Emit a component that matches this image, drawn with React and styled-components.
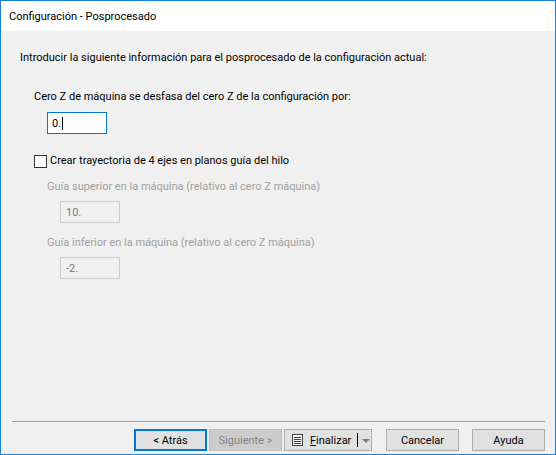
import React from "react";
import styled, { createGlobalStyle } from "styled-components";

const GlobalStyle = createGlobalStyle`
  html, body {
    margin: 0;
    padding: 0;
    background: #ffffff;
  }
  body {
    font-family: Roboto, "Liberation Sans", sans-serif;
    font-size: 11px;
    color: #000;
  }
`;

const Window = styled.div`
  width: 556px;
  height: 455px;
  box-sizing: border-box;
  border: 1px solid #1883d7;
  display: flex;
  flex-direction: column;
  background: #f0f0f0;
`;

const TitleBar = styled.div`
  height: 30px;
  flex: none;
  background: #ffffff;
  display: flex;
  align-items: center;
  padding-left: 8px;
  padding-top: 1px;
  box-sizing: border-box;
  font-size: 11px;
  line-height: 15px;
`;

const Body = styled.div`
  flex: 1;
  display: flex;
  flex-direction: column;
  padding: 19px 0 0 19px;
`;

const Text = styled.div`
  line-height: 15px;
  height: 15px;
  white-space: nowrap;
  margin-top: ${(p) => p.$mt || 0}px;
  margin-left: ${(p) => p.$ml || 0}px;
  color: ${(p) => (p.$disabled ? "#a0a0a0" : "#000")};
`;

const Field = styled.div`
  width: 60px;
  height: 22px;
  box-sizing: border-box;
  margin-top: ${(p) => p.$mt || 0}px;
  margin-left: ${(p) => p.$ml || 0}px;
  border: 1px solid ${(p) => (p.$disabled ? "#cccccc" : "#0078d7")};
  background: ${(p) => (p.$disabled ? "#f0f0f0" : "#ffffff")};
  color: ${(p) => (p.$disabled ? "#7a7a7a" : "#000")};
  padding-left: ${(p) => (p.$disabled ? 5 : 4)}px;
  display: flex;
  align-items: center;
  line-height: 15px;
`;

const Caret = styled.span`
  display: inline-block;
  width: 1px;
  height: 13px;
  background: #000;
  margin-left: 1px;
`;

const CheckRow = styled.label`
  display: flex;
  align-items: center;
  height: 15px;
  margin-top: 19px;
  margin-left: 14px;
  line-height: 15px;
  white-space: nowrap;
`;

const CheckBox = styled.span`
  width: 13px;
  height: 13px;
  box-sizing: border-box;
  border: 1px solid #333333;
  background: #ffffff;
  margin-right: 3px;
  margin-top: 1px;
`;

const Footer = styled.div`
  flex: none;
  padding: 0 10px 3px 11px;
`;

const Separator = styled.div`
  height: 1px;
  background: #a0a0a0;
  margin-bottom: 7px;
`;

const ButtonRow = styled.div`
  display: flex;
  justify-content: flex-end;
  align-items: center;
`;

const Button = styled.div`
  width: 73px;
  height: 22px;
  box-sizing: border-box;
  margin-left: ${(p) => p.$ml || 0}px;
  border: ${(p) => (p.$default ? "2px" : "1px")} solid;
  background: ${(p) => (p.$disabled ? "#cccccc" : "#e1e1e1")};
  border-color: ${(p) => (p.$disabled ? "#bfbfbf" : p.$default ? "#0078d7" : "#adadad")};
  color: ${(p) => (p.$disabled ? "#838383" : "#000")};
  display: flex;
  align-items: center;
  justify-content: center;
  line-height: 15px;
  white-space: nowrap;
`;

const SplitButton = styled.div`
  width: 88px;
  height: 22px;
  box-sizing: border-box;
  margin-left: 2px;
  border: 1px solid #adadad;
  background: #e1e1e1;
  display: flex;
  align-items: center;
  padding-left: 7px;
  line-height: 15px;
  white-space: nowrap;
`;

const SplitLabel = styled.span`
  margin-left: 7px;
  u {
    text-decoration: underline;
    text-underline-offset: 1px;
  }
`;

const SplitDivider = styled.span`
  width: 1px;
  height: 14px;
  background: #000;
  margin-left: 6px;
`;

const Arrow = styled.span`
  width: 0;
  height: 0;
  border-left: 4px solid transparent;
  border-right: 4px solid transparent;
  border-top: 4px solid #7a7a7a;
  margin-left: 4px;
  margin-top: 1px;
`;

const DocIcon = () => (
  <svg width="11" height="12" viewBox="0 0 11 12" shapeRendering="crispEdges">
    <rect x="0.5" y="0.5" width="10" height="11" fill="#f4f4f4" stroke="#404040" />
    <line x1="2" y1="3.5" x2="9" y2="3.5" stroke="#404040" />
    <line x1="2" y1="5.5" x2="9" y2="5.5" stroke="#404040" />
    <line x1="2" y1="7.5" x2="9" y2="7.5" stroke="#404040" />
    <line x1="2" y1="9.5" x2="9" y2="9.5" stroke="#404040" />
  </svg>
);

export default function App() {
  return (
    <>
      <GlobalStyle />
      <Window>
        <TitleBar>Configuración - Posprocesado</TitleBar>
        <Body>
          <Text>Introducir la siguiente información para el posprocesado de la configuración actual:</Text>
          <Text $mt={24} $ml={14}>Cero Z de máquina se desfasa del cero Z de la configuración por:</Text>
          <Field $mt={8} $ml={27}>
            0.<Caret />
          </Field>
          <CheckRow>
            <CheckBox />
            Crear trayectoria de 4 ejes en planos guía del hilo
          </CheckRow>
          <Text $mt={11} $ml={27} $disabled>Guía superior en la máquina (relativo al cero Z máquina)</Text>
          <Field $mt={7} $ml={40} $disabled>10.</Field>
          <Text $mt={12} $ml={27} $disabled>Guía inferior en la máquina (relativo al cero Z máquina)</Text>
          <Field $mt={7} $ml={40} $disabled>-2.</Field>
        </Body>
        <Footer>
          <Separator />
          <ButtonRow>
            <Button $default>&lt; Atrás</Button>
            <Button $ml={2} $disabled>Siguiente &gt;</Button>
            <SplitButton>
              <DocIcon />
              <SplitLabel><u>F</u>inalizar</SplitLabel>
              <SplitDivider />
              <Arrow />
            </SplitButton>
            <Button $ml={14}>Cancelar</Button>
            <Button $ml={13}>Ayuda</Button>
          </ButtonRow>
        </Footer>
      </Window>
    </>
  );
}
